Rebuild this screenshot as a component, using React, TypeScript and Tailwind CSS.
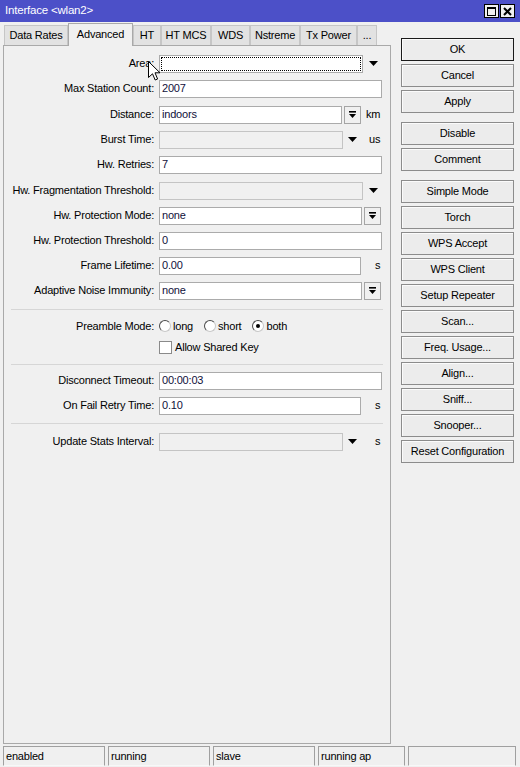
import type { ReactNode } from 'react';

function Arrow() {
  return (
    <svg width="9" height="5" viewBox="0 0 9 5" className="block">
      <path d="M0 0h9L4.5 5z" fill="#000" />
    </svg>
  );
}

function DropButton() {
  return (
    <div className="ml-[2px] flex h-[18px] w-[17px] items-center justify-center border border-[#a5a5a5] bg-[#f0f0f0]">
      <svg width="9" height="9" viewBox="0 0 9 9" className="block">
        <rect x="1" y="1" width="7" height="1.6" fill="#000" />
        <path d="M1 4h7L4.5 8z" fill="#000" />
      </svg>
    </div>
  );
}

function Box({ width, value, disabled, focus }: { width: string; value?: string; disabled?: boolean; focus?: boolean }) {
  return (
    <div
      className={`flex h-[18px] items-center border ${width} ${
        disabled ? 'border-[#c4c4c4] bg-[#f0f0f0]' : 'border-[#ababab] bg-white'
      } ${focus ? 'p-px' : 'px-[2px]'}`}
    >
      {focus ? <div className="h-full w-full border border-dotted border-black" /> : <span className="text-[#10103a]">{value}</span>}
    </div>
  );
}

function Row({ label, children, h = 'h-[25px]', extra = '' }: { label: string; children: ReactNode; h?: string; extra?: string }) {
  return (
    <div className={`flex items-center ${h} ${extra}`}>
      <div className="w-[150px] shrink-0 text-right">{label}</div>
      <div className="ml-[5px] flex items-center">{children}</div>
    </div>
  );
}

function Separator({ mt }: { mt: string }) {
  return <div className={`ml-[7px] mr-[7px] h-px bg-[#d6d6d6] ${mt}`} />;
}

function Radio({ label, checked }: { label: string; checked?: boolean }) {
  return (
    <div className="flex items-center gap-[2px]">
      <div className="flex h-[12px] w-[12px] items-center justify-center rounded-full border border-[#4a4a4a] border-r-[#c8c8c8] border-b-[#c8c8c8] bg-white">
        {checked && <div className="h-[4px] w-[4px] rounded-full bg-black" />}
      </div>
      <span>{label}</span>
    </div>
  );
}

const tabs = [
  { name: 'Data Rates', w: 'w-[64px]' },
  { name: 'Advanced', w: 'w-[65px]', active: true },
  { name: 'HT', w: 'w-[28px]' },
  { name: 'HT MCS', w: 'w-[50px]' },
  { name: 'WDS', w: 'w-[39px]' },
  { name: 'Nstreme', w: 'w-[50px]' },
  { name: 'Tx Power', w: 'w-[57px]' },
  { name: '...', w: 'w-[20px]' },
];

const buttonGroups = [
  ['OK', 'Cancel', 'Apply'],
  ['Disable', 'Comment'],
  ['Simple Mode', 'Torch', 'WPS Accept', 'WPS Client', 'Setup Repeater', 'Scan...', 'Freq. Usage...', 'Align...', 'Sniff...', 'Snooper...', 'Reset Configuration'],
];

const statusCells = [
  { text: 'enabled', w: 'w-[102px]' },
  { text: 'running', w: 'w-[102px]' },
  { text: 'slave', w: 'w-[102px]' },
  { text: 'running ap', w: 'w-[87px]' },
  { text: '', w: 'flex-1' },
];

export default function App() {
  return (
    <div className="relative flex h-[767px] w-[520px] flex-col overflow-hidden bg-[#f0f0f0] font-['Liberation_Sans',Arial,sans-serif] text-[11px] leading-none tracking-[-0.2px] text-black">
      {/* title bar */}
      <div className="flex h-[22px] shrink-0 items-center bg-[#4c50c8] pl-[5px] pr-[5px] text-[11.5px] text-white">
        <span>Interface &lt;wlan2&gt;</span>
        <div className="ml-auto flex gap-px">
          <div className="flex h-[14px] w-[15px] items-center justify-center border border-black bg-[#f0f0f0]">
            <div className="h-[9px] w-[9px] border border-t-2 border-black" />
          </div>
          <div className="flex h-[14px] w-[15px] items-center justify-center border border-black bg-[#f0f0f0]">
            <svg width="9" height="9" viewBox="0 0 9 9" className="block">
              <path d="M1 1l7 7M8 1L1 8" stroke="#000" strokeWidth="2" />
            </svg>
          </div>
        </div>
      </div>

      {/* body */}
      <div className="flex flex-1 pl-[3px]">
        <div className="mb-px flex w-[388px] flex-col">
          <div className="flex h-[23px] items-end pl-px">
            {tabs.map((t) =>
              t.active ? (
                <div
                  key={t.name}
                  className={`relative z-10 -mb-px flex h-[23px] items-center justify-center border border-b-0 border-[#a9a9a9] bg-[#f0f0f0] pb-[2px] ${t.w}`}
                >
                  {t.name}
                </div>
              ) : (
                <div
                  key={t.name}
                  className={`flex h-[20px] items-center justify-center border border-b-0 border-[#c6c6c6] bg-[#e2e2e2] ${t.w}`}
                >
                  {t.name}
                </div>
              ),
            )}
          </div>

          <div className="flex-1 border border-[#a9a9a9] pt-[5px]">
            <Row label="Area:">
              <Box width="w-[204px]" focus />
              <div className="ml-[6px]"><Arrow /></div>
            </Row>
            <Row label="Max Station Count:">
              <Box width="w-[223px]" value="2007" />
            </Row>
            <Row label="Distance:" extra="mt-px">
              <Box width="w-[183px]" value="indoors" />
              <DropButton />
              <span className="ml-[5px]">km</span>
            </Row>
            <Row label="Burst Time:">
              <Box width="w-[184px]" disabled />
              <div className="ml-[5px]"><Arrow /></div>
              <span className="ml-[12px]">us</span>
            </Row>
            <Row label="Hw. Retries:">
              <Box width="w-[223px]" value="7" />
            </Row>
            <Row label="Hw. Fragmentation Threshold:" extra="mt-px">
              <Box width="w-[204px]" disabled />
              <div className="ml-[6px]"><Arrow /></div>
            </Row>
            <Row label="Hw. Protection Mode:">
              <Box width="w-[203px]" value="none" />
              <DropButton />
            </Row>
            <Row label="Hw. Protection Threshold:">
              <Box width="w-[223px]" value="0" />
            </Row>
            <Row label="Frame Lifetime:">
              <Box width="w-[202px]" value="0.00" />
              <span className="ml-[14px]">s</span>
            </Row>
            <Row label="Adaptive Noise Immunity:">
              <Box width="w-[203px]" value="none" />
              <DropButton />
            </Row>

            <Separator mt="mt-[6px]" />
            <div className="mt-[5px]">
              <Row label="Preamble Mode:" h="h-[22px]">
                <div className="flex items-center gap-[11px]">
                  <Radio label="long" />
                  <Radio label="short" />
                  <Radio label="both" checked />
                </div>
              </Row>
              <Row label="" h="h-[20px]">
                <div className="flex items-center gap-[3px]">
                  <div className="h-[13px] w-[13px] border border-[#8a8a8a] bg-white" />
                  <span>Allow Shared Key</span>
                </div>
              </Row>
            </div>

            <Separator mt="mt-[7px]" />
            <div className="mt-[3px]">
              <Row label="Disconnect Timeout:">
                <Box width="w-[223px]" value="00:00:03" />
              </Row>
              <Row label="On Fail Retry Time:">
                <Box width="w-[202px]" value="0.10" />
                <span className="ml-[14px]">s</span>
              </Row>
            </div>

            <Separator mt="mt-[5px]" />
            <div className="mt-[5px]">
              <Row label="Update Stats Interval:">
                <Box width="w-[184px]" disabled />
                <div className="ml-[5px]"><Arrow /></div>
                <span className="ml-[18px]">s</span>
              </Row>
            </div>
          </div>
        </div>

        <div className="ml-[10px] mt-[16px] flex w-[113px] flex-col gap-[9px]">
          {buttonGroups.map((group, gi) => (
            <div key={gi} className="flex flex-col gap-[3px]">
              {group.map((b) => (
                <div
                  key={b}
                  className={`flex h-[23px] items-center justify-center border bg-[#ececec] shadow-[inset_1px_1px_0_#fbfbfb] ${
                    b === 'OK' ? 'border-[#1a1a1a]' : 'border-[#8c8c8c]'
                  }`}
                >
                  {b}
                </div>
              ))}
            </div>
          ))}
        </div>
      </div>

      {/* status bar */}
      <div className="flex h-[22px] shrink-0 gap-[3px] pl-[3px] pr-[4px] pt-px">
        {statusCells.map((c, i) => (
          <div key={i} className={`flex h-[20px] items-center border border-[#a0a0a0] border-b-[#f8f8f8] pl-[2px] ${c.w}`}>
            {c.text}
          </div>
        ))}
      </div>

      {/* mouse pointer over the Area label */}
      <svg width="13" height="20" viewBox="0 0 13 20" className="pointer-events-none absolute left-[148px] top-[61px]">
        <path d="M0.5 0.5V16.5L4.5 12.8L7.2 19L9.6 18L7 11.8H12Z" fill="#fff" stroke="#000" strokeWidth="1" strokeLinejoin="round" />
      </svg>
    </div>
  );
}
